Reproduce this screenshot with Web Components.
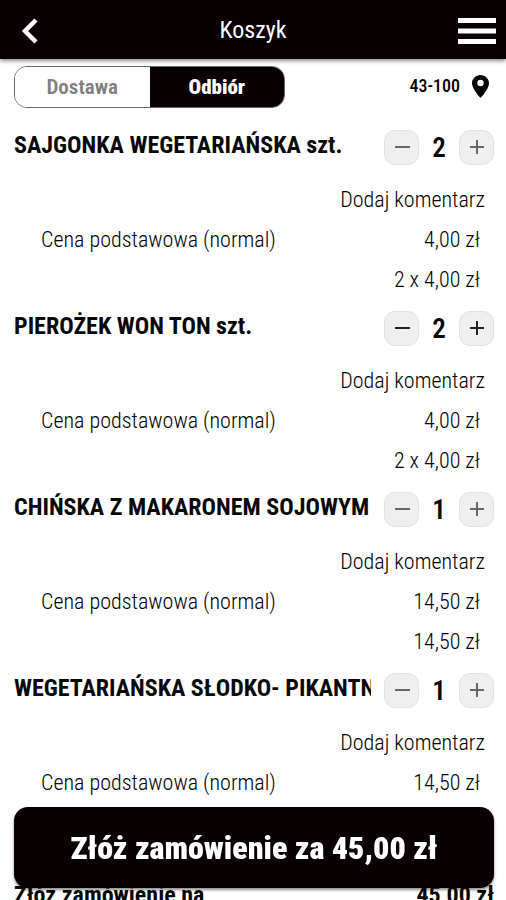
<!DOCTYPE html>
<html lang="pl">
<head>
<meta charset="utf-8">
<meta name="viewport" content="width=device-width, initial-scale=1">
<title>Koszyk</title>
<style>
body { margin: 0; background: #fff; }
</style>
</head>
<body>
<cart-app></cart-app>
<script>
const define = (name, html, setup) => {
  const template = document.createElement('template');
  template.innerHTML = html;
  customElements.define(name, class extends HTMLElement {
    connectedCallback() {
      if (this.shadowRoot) return;
      this.attachShadow({ mode: 'open' }).append(template.content.cloneNode(true));
      if (setup) setup(this, this.shadowRoot);
    }
  });
};

define('cart-header', `
<style>
:host { display: grid; grid-template-columns: 48px 1fr 48px; align-items: center; box-sizing: border-box; height: 59px; padding: 3px 5px 0; background: #080001; color: #fff; box-shadow: 0 2px 4px rgba(0,0,0,.45); position: relative; z-index: 1; }
h1 { margin: 0; text-align: center; font-size: 24px; font-weight: 400; line-height: 30px; padding-bottom: 2px; }
button { display: flex; align-items: center; justify-content: center; height: 48px; padding: 0; border: 0; background: none; color: inherit; }
</style>
<button aria-label="Wstecz"><svg width="18" height="26" viewBox="0 0 18 26"><path d="M16 2 5 13l11 11" fill="none" stroke="currentColor" stroke-width="4.500"/></svg></button>
<h1><slot></slot></h1>
<button aria-label="Menu"><svg width="38" height="26" viewBox="0 0 38 26" fill="currentColor"><path d="M0 0h38v5H0zM0 10.500h38v5H0zM0 21h38v5H0z"/></svg></button>
`);

define('delivery-bar', `
<style>
:host { display: flex; justify-content: space-between; align-items: center; padding: 7px 17px 11px 14px; }
.switch { display: flex; box-sizing: border-box; width: 271px; height: 42px; border: 1px solid #666; border-radius: 13px; overflow: hidden; }
.switch button { flex: 1; padding: 0; border: 0; background: #fff; color: #808080; font: 600 21px/36px var(--font); }
.switch button[aria-pressed=true] { background: #080001; color: #fff; font-weight: 900; }
.place { display: flex; align-items: center; gap: 12px; padding: 0 0 2px; border: 0; background: none; color: #080001; font: 500 18px/24px var(--font); }
</style>
<div class="switch" role="group" aria-label="Sposób odbioru">
<button aria-pressed="false">Dostawa</button><button aria-pressed="true">Odbiór</button>
</div>
<button class="place">43-100<svg width="17" height="23" viewBox="0 0 17 23"><path fill="currentColor" fill-rule="evenodd" d="M8.500 0C3.800 0 0 3.700 0 8.300 0 14.300 8.500 23 8.500 23S17 14.300 17 8.300C17 3.700 13.200 0 8.500 0zm0 4.800a3.200 3.200 0 1 1 0 6.400 3.200 3.200 0 0 1 0-6.400z"/></svg></button>
`);

define('quantity-stepper', `
<style>
:host { display: grid; grid-template-columns: 35px 1fr 35px; align-items: center; flex: none; width: 110px; }
button { display: flex; align-items: center; justify-content: center; box-sizing: border-box; height: 35px; padding: 0; border: 1px solid #e2e2e2; border-radius: 11px; background: #efefef; color: #666; }
output { padding-top: 2px; text-align: center; font-size: 27px; font-weight: 600; line-height: 34px; }
:host([strong]) button { color: #222; }
</style>
<button aria-label="Mniej"><svg width="16" height="16" viewBox="0 0 16 16"><path d="M1 8h15" stroke="currentColor" stroke-width="2"/></svg></button>
<output><slot></slot></output>
<button aria-label="Więcej"><svg width="16" height="16" viewBox="0 0 16 16"><path d="M1 8h14M8 1v14" fill="none" stroke="currentColor" stroke-width="2"/></svg></button>
`);

define('cart-item', `
<style>
:host { display: block; padding: 0 12px 0 14px; }
header { display: flex; align-items: center; gap: 13px; height: 36px; padding: 10px 0 15px; }
h2 { flex: 1; min-width: 0; margin: 0 0 4px; overflow: hidden; white-space: nowrap; font-size: 24px; font-weight: 700; line-height: 32px; }
.row { display: flex; justify-content: space-between; min-height: 40px; padding: 0 14px 0 27px; font-size: 22px; font-weight: 300; line-height: 40px; color: #000; }
.comment { justify-content: flex-end; padding-right: 9px; }
button { padding: 0; border: 0; background: none; color: inherit; font: inherit; }
.total { justify-content: flex-end; }
</style>
<header><h2><slot></slot></h2><quantity-stepper></quantity-stepper></header>
<div class="row comment"><button>Dodaj komentarz</button></div>
<div class="row"><span>Cena podstawowa (normal)</span><span class="price"></span></div>
<div class="row total"></div>
`, (host, root) => {
  const stepper = root.querySelector('quantity-stepper');
  stepper.textContent = host.getAttribute('quantity');
  stepper.toggleAttribute('strong', host.hasAttribute('strong'));
  root.querySelector('.price').textContent = host.getAttribute('price');
  root.querySelector('.total').textContent = host.getAttribute('total');
});

define('cart-summary', `
<style>
:host { display: flex; justify-content: space-between; padding: 36px 12px 120px 14px; font-size: 24px; font-weight: 700; line-height: 32px; }
</style>
<span>Złóż zamówienie na</span><span><slot></slot></span>
`);

define('order-button', `
<style>
:host { display: block; }
button { width: 100%; height: 81px; padding: 0; border: 0; border-radius: 14px; background: #080001; color: #fff; font: 900 32px/40px var(--font); box-shadow: 0 2px 3px rgba(0,0,0,.45); }
</style>
<button><slot></slot></button>
`);

define('cart-app', `
<style>
:host { --font: "Roboto Condensed", "Liberation Sans Narrow", Roboto, sans-serif; display: flex; flex-direction: column; height: 100vh; overflow: hidden; color: #080808; font-family: var(--font); }
main { flex: 1; min-height: 0; overflow-y: auto; scrollbar-width: none; }
order-button { position: fixed; left: 14px; right: 12px; bottom: 12px; }
</style>
<cart-header>Koszyk</cart-header>
<main>
<delivery-bar></delivery-bar>
<cart-item quantity="2" price="4,00 zł" total="2 x 4,00 zł">SAJGONKA WEGETARIAŃSKA szt.</cart-item>
<cart-item quantity="2" price="4,00 zł" total="2 x 4,00 zł" strong>PIEROŻEK WON TON szt.</cart-item>
<cart-item quantity="1" price="14,50 zł" total="14,50 zł">CHIŃSKA Z MAKARONEM SOJOWYM</cart-item>
<cart-item quantity="1" price="14,50 zł" total="">WEGETARIAŃSKA SŁODKO- PIKANTNA</cart-item>
<cart-summary>45,00 zł</cart-summary>
</main>
<order-button>Złóż zamówienie za 45,00 zł</order-button>
`);
</script>
</body>
</html>
